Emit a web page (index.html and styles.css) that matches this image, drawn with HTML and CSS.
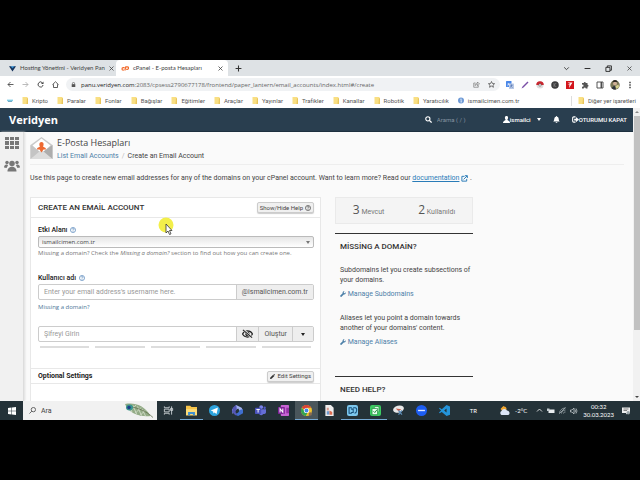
FILE: index.html
```html
<!DOCTYPE html>
<html lang="tr">
<head>
    <meta charset="UTF-8">
    <meta name="viewport" content="width=device-width, initial-scale=1.0">
    <title>cPanel - E-posta Hesapları</title>
    <link rel="stylesheet" href="styles.css">
</head>
<body>
<svg class="defs" width="0" height="0">
    <symbol id="folder" viewBox="0 0 12 14"><path d="M1 0h9l2 3v11H1z" fill="#f9df83"/><path d="M10 1l2 2v11h-3z" fill="#e9c55c"/></symbol>
    <symbol id="help" viewBox="0 0 16 16"><circle cx="8" cy="8" r="6.8" fill="none" stroke="currentColor" stroke-width="1.8"/><path d="M5.700 6.400c0-3.200 4.800-3 4.800-.4 0 1.700-2.500 1.700-2.500 3.600M8 11v1.800" fill="none" stroke="currentColor" stroke-width="1.800"/></symbol>
    <symbol id="wrench" viewBox="0 0 16 16"><path d="M15 3.500l-2.500 2.200-2-.500-.500-2L12.300.8C8.800-.3 6 2.500 7 5.800L.9 12c-1.800 2 1.200 5 3.200 3.100L10.200 9c3.500 1 6.100-2 4.800-5.500z" fill="currentColor"/></symbol>
    <symbol id="close" viewBox="0 0 10 10"><path d="M1 1l8 8M9 1l-8 8" stroke="currentColor" stroke-width="1.600"/></symbol>
</svg>

<header class="browser">
    <div class="tabs">
        <div class="tab">
            <svg class="icon" viewBox="0 0 16 16"><path d="M0 3h5l3 4 3-4h5l-8 12z" fill="#17335c"/><path d="M4 3h8l-4 5z" fill="#2d8bd0"/></svg>
            <span class="tab-title">Hosting Yönetimi - Veridyen Pan</span>
            <button class="plain" aria-label="Kapat"><svg class="tiny"><use href="#close"/></svg></button>
        </div>
        <div class="tab active">
            <svg class="icon cp" viewBox="0 0 20 14"><path d="M9 5H5.500a2.800 2.800 0 0 0 0 6H7M9.500 12l2.500-9h4a2.800 2.800 0 0 1 0 6h-3" fill="none" stroke="#f26a2b" stroke-width="3"/></svg>
            <span class="tab-title">cPanel - E-posta Hesapları</span>
            <button class="plain" aria-label="Kapat"><svg class="tiny"><use href="#close"/></svg></button>
        </div>
        <button class="plain new-tab" aria-label="Yeni sekme"><svg class="icon" viewBox="0 0 12 12"><path d="M6 1v10M1 6h10" stroke="#333" stroke-width="1.800"/></svg></button>
        <div class="window-buttons">
            <button class="plain"><svg class="icon" viewBox="0 0 12 12"><path d="M2 4l4 4 4-4" fill="none" stroke="#333" stroke-width="1.500"/></svg></button>
            <button class="plain"><svg class="icon" viewBox="0 0 12 12"><path d="M1 6h10" stroke="#222" stroke-width="1.600"/></svg></button>
            <button class="plain"><svg class="icon" viewBox="0 0 12 12"><path d="M1.500 4h7v7h-7zM4 4V1.500h7V9H8.500" fill="none" stroke="#222" stroke-width="1.500"/></svg></button>
            <button class="plain"><svg class="tiny"><use href="#close"/></svg></button>
        </div>
    </div>

    <div class="toolbar">
        <div class="nav-buttons">
            <button class="plain"><svg class="icon" viewBox="0 0 14 14"><path d="M13 7H2M7 2L2 7l5 5" fill="none" stroke="#444" stroke-width="1.700"/></svg></button>
            <button class="plain"><svg class="icon" viewBox="0 0 14 14"><path d="M1 7h11M7 2l5 5-5 5" fill="none" stroke="#aaa" stroke-width="1.600"/></svg></button>
            <button class="plain"><svg class="icon" viewBox="0 0 14 14"><path d="M12 8a5 5 0 1 1-1.500-4.800" fill="none" stroke="#444" stroke-width="1.900"/><path d="M13 1v5H8z" fill="#444"/></svg></button>
            <button class="plain"><svg class="icon" viewBox="0 0 14 14"><path d="M.8 7.500L7 1.500l6.200 6M3 6.500V13h8V6.500" fill="none" stroke="#444" stroke-width="1.700"/></svg></button>
        </div>
        <div class="address">
            <svg class="tiny" viewBox="0 0 12 14"><rect x="1" y="6" width="10" height="8" fill="#555"/><path d="M3 6V4a3 3 0 0 1 6 0v2" fill="none" stroke="#555" stroke-width="1.800"/></svg>
            <span class="url"><b>panu.veridyen.com</b>:2083/cpsess2790677178/frontend/paper_lantern/email_accounts/index.html#/create</span>
            <svg class="icon" viewBox="0 0 14 14"><path d="M5 4H1.500v8.500h9V9M4 9c0-3 2-4.500 5-4.500V2l4 4-4 3.500V7C7 7 5.500 7.500 4 9z" fill="none" stroke="#666" stroke-width="1.200"/></svg>
            <svg class="icon" viewBox="0 0 14 14"><path d="M7 1l1.800 4 4.400.4-3.300 2.900 1 4.200L7 10.200l-3.900 2.300 1-4.200L.8 5.400 5.200 5z" fill="none" stroke="#444" stroke-width="1.400"/></svg>
        </div>
        <div class="extensions">
            <svg class="ext" viewBox="0 0 16 16"><rect width="11" height="12" rx="1" fill="#4a87e8"/><rect x="6" y="5" width="10" height="11" rx="1" fill="#b9c9e6"/><path d="M2.500 6h5M5 4v2c0 2-1 3-2.500 4M5 6c0 2 1 3 2 3.500" stroke="#fff" fill="none"/><path d="M8.500 8.500h5M11 7v2l-2 4M9.500 10l3.500 3.500" stroke="#345b9e" fill="none"/></svg>
            <svg class="ext" viewBox="0 0 16 16"><path d="M1 15L3 11 13 1l2 2L5 13z" fill="#7a4fa6"/></svg>
            <svg class="ext" viewBox="0 0 16 16"><circle cx="8" cy="8" r="7" fill="#ddd"/><path d="M.5 8a7.500 7.500 0 0 1 15 0z" fill="#c9252e"/><circle cx="8" cy="8" r="2.500" fill="#fff" stroke="#444"/></svg>
            <svg class="ext" viewBox="0 0 16 16"><circle cx="8" cy="8" r="7.500" fill="#3b3b3d"/><path d="M6 4v8M10.500 4L6.500 8l4 4" stroke="#888" stroke-width="1.500" fill="none"/></svg>
            <svg class="ext" viewBox="0 0 16 16"><rect width="16" height="16" fill="#d3161c"/><path d="M3 3h10L6 14l1-6H3l6-2z" fill="#fff"/></svg>
            <svg class="ext" viewBox="0 0 16 16"><path d="M2 4h3.500a2 2 0 1 1 4 0H13v3.500a2 2 0 1 1 0 4V15H9.500a2 2 0 1 0-4 0H2v-4a2 2 0 1 0 0-3.500z" fill="#555"/></svg>
            <svg class="ext" viewBox="0 0 16 16"><path d="M2 2h12v12H2zM10 2v12M11 2v12" fill="none" stroke="#444" stroke-width="1.800"/></svg>
            <svg class="ext avatar" viewBox="0 0 20 20"><circle cx="10" cy="10" r="9.500" fill="#7a7856"/><circle cx="10" cy="7" r="4" fill="#d0b097"/><path d="M5 5a5 5 0 0 1 10 0l-2-1H8z" fill="#2b2722"/><path d="M3 16l6-5 3 8H7z" fill="#2c323b"/><path d="M11 12l6-3 1 5-5 4z" fill="#d7d28e"/></svg>
            <svg class="ext" viewBox="0 0 16 16"><path d="M8 1.500v3M8 6.500v3M8 11.500v3" stroke="#444" stroke-width="3"/></svg>
        </div>
    </div>

    <nav class="bookmarks">
        <svg class="mark" viewBox="0 0 14 14"><path d="M0 5h14v3H0z" fill="#76cbe6"/><path d="M2 8h10v2H2z" fill="#4c94b5"/></svg>
        <a href="#"><svg class="mark"><use href="#folder"/></svg>Kripto</a>
        <a href="#"><svg class="mark"><use href="#folder"/></svg>Paralar</a>
        <a href="#"><svg class="mark"><use href="#folder"/></svg>Fonlar</a>
        <a href="#"><svg class="mark"><use href="#folder"/></svg>Bağışlar</a>
        <a href="#"><svg class="mark"><use href="#folder"/></svg>Eğitimler</a>
        <a href="#"><svg class="mark"><use href="#folder"/></svg>Araçlar</a>
        <a href="#"><svg class="mark"><use href="#folder"/></svg>Yayınlar</a>
        <a href="#"><svg class="mark"><use href="#folder"/></svg>Trafikler</a>
        <a href="#"><svg class="mark"><use href="#folder"/></svg>Kanallar</a>
        <a href="#"><svg class="mark"><use href="#folder"/></svg>Robotik</a>
        <a href="#"><svg class="mark"><use href="#folder"/></svg>Yaratıcılık</a>
        <a href="#"><svg class="mark" viewBox="0 0 16 16"><circle cx="8" cy="8" r="8" fill="#6e9ad6"/><path d="M6 3h4v3H6zM7 7h3v6H7z" fill="#dce9f8"/></svg>ismailcimen.com.tr</a>
        <a href="#" class="others"><svg class="mark"><use href="#folder"/></svg>Diğer yer işaretleri</a>
    </nav>
</header>

<div class="viewport">
    <div class="page">
        <header class="topbar">
            <a href="#" class="brand">Veridyen</a>
            <label class="search">
                <svg class="icon" viewBox="0 0 16 16"><circle cx="6.500" cy="6.500" r="4.800" fill="none" stroke="#fff" stroke-width="2.600"/><path d="M10 10l5 5" stroke="#fff" stroke-width="3"/></svg>
                <input type="text" placeholder="Arama ( / )">
            </label>
            <button class="plain user"><svg class="icon" viewBox="0 0 16 16"><path d="M8 0c5 0 4 6 2 8.500 0 2 6 2 6 7.500H0c0-5.500 6-5.500 6-7.500C4 6 3 0 8 0z" fill="#fff"/></svg>ismailci<span class="caret"></span></button>
            <button class="plain bell" aria-label="Bildirimler"><svg class="icon" viewBox="0 0 16 16"><path d="M8 0c1 0 1.300.8 1.300 1.500C15 3 11.500 9 15.500 12.500H.5C4.500 9 1 3 6.700 1.500 6.700.8 7 0 8 0zM6 13.500h4a2 2 0 0 1-4 0z" fill="#fff"/></svg></button>
            <a href="#" class="logout"><svg class="icon" viewBox="0 0 16 16"><path d="M8 2H4a2.500 2.500 0 0 0-2.500 2.500v7A2.500 2.500 0 0 0 4 14h4" fill="none" stroke="#fff" stroke-width="2.500"/><path d="M5 6h4V2l7 6-7 6v-4H5z" fill="#fff"/></svg>OTURUMU KAPAT</a>
        </header>

        <div class="body">
            <aside class="sidebar">
                <svg class="side-icon" viewBox="0 0 14 14"><path d="M0 1h4v3H0zM5 1h4v3H5zM10 1h4v3h-4zM0 5h4v4H0zM5 5h4v4H5zM10 5h4v4h-4zM0 10h4v3H0zM5 10h4v3H5zM10 10h4v3h-4z" fill="#777"/></svg>
                <svg class="side-icon people" viewBox="0 0 32 24"><circle cx="16" cy="7" r="5.500" fill="#777"/><circle cx="6" cy="5" r="3.500" fill="#777"/><circle cx="26" cy="5" r="3.500" fill="#777"/><path d="M7 23c-1-13 19-13 18 0zM0 15c0-8 8-7 8-4l-3 5zM32 15c0-8-8-7-8-4l3 5z" fill="#777"/></svg>
            </aside>

            <main class="main">
                <div class="page-head">
                    <svg class="mail" viewBox="0 0 46 46"><path d="M1 17L23 1l22 16v28H1z" fill="#c9c9c9"/><path d="M5 18L23 4l18 14-18 16z" fill="#fff"/><path d="M1 17l22 16L1 45z" fill="#c4c4c4"/><path d="M45 17L23 33l22 12z" fill="#adadad"/><path d="M1 45l18-15q4-3 8 0l18 15z" fill="#dcdcdc"/><path d="M23 11c5 0 5 6 3 9 1 2 6 1 6 6h-5l-4 6-4-6h-5c0-5 5-4 6-6-2-3-2-9 3-9z" fill="#ee6a32"/></svg>
                    <div>
                        <h1>E-Posta Hesapları</h1>
                        <div class="crumbs"><a href="#">List Email Accounts</a><span>/</span>Create an Email Account</div>
                    </div>
                </div>

                <p class="intro">Use this page to create new email addresses for any of the domains on your cPanel account. Want to learn more? Read our <a href="#">documentation</a> <svg class="tiny" viewBox="0 0 16 16"><path d="M8 3H2v11h11V9M6 10l8-8M9 1.500h5.500V7" fill="none" stroke="#2a7cb8" stroke-width="2.200"/></svg> .</p>

                <div class="columns">
                    <form class="panel">
                        <div class="panel-head">
                            <h2>CREATE AN EMAİL ACCOUNT</h2>
                            <button type="button" class="small-btn">Show/Hide Help <svg class="help"><use href="#help"/></svg></button>
                        </div>
                        <div class="fields">
                            <label for="domain">Etki Alanı <svg class="help"><use href="#help"/></svg></label>
                            <div class="select-wrap">
                                <select id="domain"><option>ismailcimen.com.tr</option></select>
                                <span class="caret"></span>
                            </div>
                            <p class="hint">Missing a domain? Check the <i>Missing a domain?</i> section to find out how you can create one.</p>

                            <label for="username" class="spaced">Kullanıcı adı <svg class="help"><use href="#help"/></svg></label>
                            <div class="group">
                                <input id="username" type="text" placeholder="Enter your email address's username here.">
                                <span class="addon">@ismailcimen.com.tr</span>
                            </div>
                            <a href="#" class="hint">Missing a domain?</a>

                            <div class="group password">
                                <input type="password" placeholder="Şifreyi Girin" aria-label="Şifre">
                                <button type="button" class="addon" aria-label="Göster"><svg class="eye" viewBox="0 0 24 20"><path d="M1 10c5-9 17-9 22 0-5 9-17 9-22 0z" fill="none" stroke="#222" stroke-width="2.500"/><circle cx="12" cy="10" r="5" fill="#222"/><path d="M3 1l19 17" stroke="#eee" stroke-width="5"/><path d="M2 1l20 17" stroke="#222" stroke-width="2.500"/></svg></button>
                                <button type="button" class="addon">Oluştur</button>
                                <button type="button" class="addon more" aria-label="Seçenekler"><span class="caret"></span></button>
                            </div>
                            <div class="strength"><i></i><i></i><i></i><i></i><i></i></div>
                        </div>
                        <div class="optional">
                            <h3>Optional Settings</h3>
                            <button type="button" class="small-btn"><svg class="tiny" viewBox="0 0 16 16"><path d="M0 16l1-5L10 2l4 4-9 9zM11 1l1-1q4 0 4 4l-1 1z" fill="#333"/></svg> Edit Settings</button>
                        </div>
                    </form>

                    <aside class="info">
                        <div class="counts">
                            <div><b>3</b> Mevcut</div>
                            <div><b>2</b> Kullanıldı</div>
                        </div>
                        <section>
                            <h2>MİSSİNG A DOMAİN?</h2>
                            <p>Subdomains let you create subsections of your domains.</p>
                            <a href="#"><svg class="tiny"><use href="#wrench"/></svg> Manage Subdomains</a>
                            <p>Aliases let you point a domain towards another of your domains' content.</p>
                            <a href="#"><svg class="tiny"><use href="#wrench"/></svg> Manage Aliases</a>
                        </section>
                        <section>
                            <h2>NEED HELP?</h2>
                        </section>
                    </aside>
                </div>
            </main>
        </div>
    </div>
    <div class="scrollbar">
        <span class="arrow up"></span>
        <span class="thumb"></span>
        <span class="arrow down"></span>
    </div>
    <svg class="pointer" viewBox="0 0 16 20"><circle cx="8" cy="8" r="7.500" fill="#f3ef4a"/><path d="M8 7v9l2-2 1.500 3.500 1.500-.600L11.500 13.500H14z" fill="#fff" stroke="#333" stroke-width=".8"/></svg>
</div>

<footer class="taskbar">
    <button class="plain start" aria-label="Başlat"><svg class="app" viewBox="0 0 16 16"><path d="M0 2.200L7 1.200V7.500H0zM8 1l8-1v7.500H8zM0 8.500h7v6.300l-7-1zM8 8.500h8V16l-8-1z" fill="#fff"/></svg></button>
    <label class="task-search">
        <svg class="icon" viewBox="0 0 16 16"><circle cx="10" cy="6" r="5" fill="none" stroke="#333" stroke-width="1.600"/><path d="M6.500 9.500L1 15" stroke="#333" stroke-width="1.600"/></svg>
        <input type="text" placeholder="Ara">
        <svg class="feather" viewBox="0 0 60 30"><path d="M2 2C22-2 42 6 53 26 36 28 12 24 2 2z" fill="#93ab86"/><path d="M10 6l6 12M18 5l7 17M27 7l8 18M36 12l7 14M14 15L24 4M23 20L34 9M33 24l9-9" stroke="#dde4d4" stroke-width="1.500"/><path d="M8 7c20 2 36 9 50 22" fill="none" stroke="#5f6c4b" stroke-width="1.500"/><ellipse cx="11" cy="9" rx="7" ry="6" fill="#39958d"/><circle cx="10" cy="9" r="3.500" fill="#1d3d8c"/></svg>
    </label>
    <div class="apps">
        <button class="plain"><svg class="app" viewBox="0 0 16 16"><path d="M2 2v2h7V2M2 14v-2h7v2M2 6h7v4H2zM12.500 2v12M11 5h3v3h-3z" fill="none" stroke="#ccd3d6" stroke-width="1.300"/></svg></button>
        <button class="plain open"><svg class="app" viewBox="0 0 16 16"><path d="M0 1h6l2 2h8v12H0z" fill="#f5c449"/><path d="M0 6h16v9H0z" fill="#fbdc78"/><path d="M3 10h10v5H10v-2H6v2H3z" fill="#3d8fd1"/></svg></button>
        <button class="plain"><svg class="app" viewBox="0 0 16 16"><circle cx="8" cy="8" r="8" fill="#2ca3dd"/><path d="M2.500 8L13 3.500l-2 9.500-3-2-1.500 1.500L6 9.500z" fill="#fff"/></svg></button>
        <button class="plain"><svg class="app" viewBox="0 0 16 16"><path d="M6 0l8 4 2 4-4 2-3-5-5 3-3 5-1-6z" fill="#a3b2f0"/><path d="M16 6v6l-7 4-5-2 5-3 3-4z" fill="#3f6fd0"/><path d="M1 4l5-4 1 5-2 5 3 4-3 1-5-5z" fill="#5558b5"/></svg></button>
        <button class="plain"><svg class="app" viewBox="0 0 16 16"><circle cx="9" cy="3" r="2.800" fill="#7b83eb"/><circle cx="14" cy="4" r="1.800" fill="#5059c9"/><path d="M6 6h10v5q-1 3-4 2-3 4-6 0z" fill="#656ed5"/><rect y="4" width="9" height="9" rx="1" fill="#4b53bc"/><path d="M2 6.500h5M4.500 6.500V11" stroke="#fff" stroke-width="1.400"/></svg></button>
        <button class="plain"><svg class="app" viewBox="0 0 16 16"><rect x="4" width="12" height="16" rx="1" fill="#c764d3"/><path d="M12 4h4v8h-4z" fill="#9332a5"/><rect y="3" width="10" height="10" rx="1" fill="#80239a"/><path d="M3 11V5.500l4 5V5" fill="none" stroke="#fff" stroke-width="1.500"/></svg></button>
        <button class="plain open current"><svg class="app" viewBox="0 0 16 16"><circle cx="8" cy="8" r="8" fill="#f3c52e"/><path d="M8 8L1 4a8 8 0 0 1 14 0H8z" fill="#dc4437"/><path d="M1 4a8 8 0 0 0 6 12l3-6H6z" fill="#35a353"/><circle cx="8" cy="8" r="3.800" fill="#fff"/><circle cx="8" cy="8" r="2.800" fill="#4285e8"/><circle cx="13.500" cy="13" r="2.500" fill="#8a6c52"/></svg></button>
        <button class="plain"><svg class="app" viewBox="0 0 16 16"><path d="M2 0h8l4 4v12H2z" fill="#eee"/><path d="M4 4h3v4H4z" fill="#d89b8f"/><path d="M4 9h4v5H4z" fill="#6d9ace"/><path d="M8 8l4 2v4H8z" fill="#db6c51"/></svg></button>
        <button class="plain open"><svg class="app" viewBox="0 0 16 16"><rect width="16" height="16" rx="3" fill="#7cc7ed"/><path d="M7 4H3v8h4M6 6h3v5H6M9 4h3c3 0 3 7-1 8" fill="none" stroke="#164d78" stroke-width="1.500"/></svg></button>
        <button class="plain open"><svg class="app" viewBox="0 0 16 16"><rect width="16" height="16" rx="3" fill="#3ccb62"/><path d="M3 5h8v9H3zM6 2h7v8" fill="#e9fff0" stroke="#1b8939"/><path d="M5 9l2 2 3-4" fill="none" stroke="#1b8939" stroke-width="1.400"/></svg></button>
        <button class="plain"><svg class="app" viewBox="0 0 16 16"><ellipse cx="8" cy="6" rx="8" ry="5" fill="#e8e8e8" transform="rotate(-15 8 6)"/><path d="M4 5l8 1-4 3z" fill="#c95a4a"/><path d="M8 8l5 6M13 8l-5 6" stroke="#5d8db7" stroke-width="1.800"/></svg></button>
        <button class="plain"><svg class="app" viewBox="0 0 16 16"><circle cx="8" cy="8" r="8" fill="#1d5df2"/><path d="M3 7h10v2H3z" fill="#dfe9ff"/></svg></button>
        <button class="plain"><svg class="app" viewBox="0 0 16 16"><path d="M11 0l5 2v12l-5 2-7-6-3 2-1-1 3-3-3-3 1-1 3 2zM11 5L7.500 8l3.500 3z" fill="#2494da" fill-rule="evenodd"/></svg></button>
    </div>
    <div class="tray">
        <span class="lang">TR</span>
        <svg class="weather" viewBox="0 0 24 20"><path d="M9 1l4 5-5 6-5-5z" fill="#efae3c"/><circle cx="10" cy="7" r="5" fill="#f0a52f"/><path d="M5 19a4.500 4.500 0 0 1 0-8 6 6 0 0 1 11-1 5 5 0 0 1 3 9z" fill="#dbe5f6"/></svg>
        <span class="degree">-2°C</span>
        <svg class="icon" viewBox="0 0 14 14"><path d="M2 9l5-5 5 5" fill="none" stroke="#fff" stroke-width="1.600"/></svg>
        <svg class="ext" viewBox="0 0 16 16"><path d="M3 5h12v7H3z" fill="#e8ecee"/><path d="M0 3h5v5H0z" fill="#c3cbcf"/></svg>
        <svg class="icon" viewBox="0 0 14 14"><path d="M1 13C1 7 6 2 13 2M5 13c0-4 3-7 8-7M9 13c0-2 1-3 4-3M1 13L13 1" fill="none" stroke="#bbc4c8" stroke-width="1.300"/></svg>
        <svg class="ext" viewBox="0 0 16 16"><path d="M1 6h3l4-4v12l-4-4H1z" fill="none" stroke="#dde3e5" stroke-width="1.300"/><path d="M10 5q2 3 0 6M12 3q4 5 0 10" fill="none" stroke="#dde3e5" stroke-width="1.300"/></svg>
        <div class="clock">00:32<br>30.03.2023</div>
        <svg class="ext" viewBox="0 0 16 16"><path d="M0 1h16v11h-5l-3 3v-3H0z" fill="#eee"/><path d="M3 4h10M3 7h7" stroke="#555" stroke-width="1.400"/><circle cx="12.500" cy="11.500" r="3.500" fill="#9aa5a9"/></svg>
    </div>
</footer>
</body>
</html>
```

FILE: styles.css
```css
* {
    box-sizing: border-box;
}

body {
    display: flex;
    flex-direction: column;
    height: 100vh;
    margin: 0;
    padding: 60px 0;
    overflow: hidden;
    background: #000;
    color: #444;
    font-family: Roboto, "Open Sans", sans-serif;
    font-size: 6px;
    line-height: 10px;
}

h1, h2, h3, p {
    margin: 0;
    font-weight: 400;
}

a {
    color: #4d80a8;
    text-decoration: none;
}

svg {
    flex: none;
}

input, button, select {
    margin: 0;
    padding: 0;
    font: inherit;
    color: inherit;
}

input {
    min-width: 0;
    border: 0;
    outline: 0;
    background: none;
}

.defs {
    position: absolute;
}

.plain {
    display: flex;
    align-items: center;
    justify-content: center;
    border: 0;
    background: none;
}

.tiny {
    width: 5px;
    height: 5px;
}

.icon {
    width: 7px;
    height: 7px;
}

.ext {
    width: 8px;
    height: 8px;
}

.caret {
    width: 4px;
    border: 2px solid transparent;
    border-top: 3px solid currentColor;
    border-bottom: 0;
}

/* browser */
.browser {
    flex: none;
}

.tabs {
    display: flex;
    height: 16px;
    background: #dee2e5;
    font-family: Lato, sans-serif;
}

.tab {
    display: flex;
    align-items: center;
    gap: 4px;
    width: 116px;
    padding: 0 5px 0 9px;
}

.tab.active {
    width: 112px;
    padding-left: 5px;
    border-radius: 4px 4px 0 0;
    background: #fff;
}

.tab .cp {
    width: 8px;
}

.tab-title {
    flex: 1;
    white-space: nowrap;
}

.new-tab {
    width: 20px;
}

.window-buttons {
    display: flex;
    margin-left: auto;
}

.window-buttons button {
    width: 21px;
}

.toolbar {
    display: flex;
    align-items: center;
    height: 17px;
    background: #fff;
}

.nav-buttons {
    display: flex;
    gap: 8px;
    padding: 0 7px;
}

.address {
    display: flex;
    flex: 1;
    align-items: center;
    gap: 8px;
    height: 13px;
    padding: 0 5px;
    border-radius: 7px;
    background: #f0f2f4;
}

.address .tiny {
    margin-right: -3px;
}

.url {
    flex: 1;
    white-space: nowrap;
    color: #666;
    font-family: "Open Sans", sans-serif;
}

.url b {
    color: #222;
    font-weight: 400;
}

.extensions {
    display: flex;
    align-items: center;
    gap: 7px;
    padding: 0 6px;
}

.avatar {
    width: 10px;
    height: 10px;
    margin: 0 -1px;
}

.bookmarks {
    display: flex;
    align-items: center;
    gap: 9px;
    height: 15px;
    padding: 0 4px 0 7px;
    background: #fff;
    white-space: nowrap;
}

.bookmarks a {
    display: flex;
    align-items: center;
    gap: 4px;
    color: #555;
}

.bookmarks .others {
    margin-left: auto;
    padding-left: 6px;
    border-left: 1px solid #ddd;
}

.mark {
    width: 6px;
    height: 7px;
}

/* cpanel */
.viewport {
    position: relative;
    display: flex;
    flex: 1;
    min-height: 0;
    background: #fafafa;
}

.page {
    display: flex;
    flex: 1;
    flex-direction: column;
    min-width: 0;
    overflow: hidden;
}

.topbar {
    display: flex;
    flex: none;
    align-items: center;
    height: 24px;
    padding: 0 6px 0 9px;
    border-bottom: 1px solid #1d303f;
    background: #293e4f;
    color: #fff;
    font-weight: 500;
}

.topbar a {
    color: #fff;
}

.topbar .brand {
    margin-right: auto;
    font-family: "Open Sans", sans-serif;
    font-size: 11px;
    font-weight: 700;
}

.search {
    display: flex;
    align-items: center;
    gap: 5px;
    width: 78px;
}

.search input {
    width: 60px;
    font-weight: 400;
}

.search input::placeholder {
    color: #8593a0;
}

.user .caret {
    margin-left: 6px;
}

.bell {
    margin: 0 12px;
}

.logout {
    display: flex;
    align-items: center;
}

.body {
    display: flex;
    flex: 1;
    min-height: 0;
}

.sidebar {
    display: flex;
    flex-direction: column;
    align-items: center;
    gap: 9px;
    width: 24px;
    padding-top: 4px;
    border-right: 1px solid #ddd;
    background: #f1f1f1;
    box-shadow: 1px 0 2px #ddd;
}

.side-icon {
    width: 14px;
    height: 14px;
}

.side-icon.people {
    width: 16px;
}

.main {
    flex: 1;
    padding: 0 9px 0 6px;
    font-size: 7px;
}

.page-head {
    display: flex;
    gap: 4px;
    height: 33px;
    padding-top: 4px;
    border-bottom: 1px solid #eee;
}

.mail {
    width: 23px;
    height: 24px;
}

h1 {
    font-family: "Open Sans", sans-serif;
    font-size: 9px;
    line-height: 14px;
}

.crumbs {
    line-height: 13px;
}

.crumbs span {
    margin: 0 3px;
    color: #bbb;
}

.intro {
    padding: 8px 0 14px;
}

.intro a {
    color: #2a7cb8;
    text-decoration: underline;
}

.intro .tiny {
    width: 7px;
    height: 7px;
    vertical-align: middle;
}

.columns {
    display: grid;
    grid-template-columns: 291fr 138fr 137fr;
    gap: 14px;
}

.panel {
    height: 230px;
    border: 1px solid #e8e8e8;
    background: #fff;
}

.panel-head,
.optional {
    display: flex;
    align-items: center;
    justify-content: space-between;
    padding: 0 6px 0 7px;
    border-bottom: 1px solid #e8e8e8;
}

.panel-head {
    height: 20px;
}

h2 {
    color: #333;
    font-size: 8px;
    font-weight: 500;
}

h3 {
    color: #222;
    font-size: 7px;
    font-weight: 700;
}

.small-btn {
    display: flex;
    align-items: center;
    gap: 2px;
    height: 11px;
    padding: 0 2px;
    border: 1px solid #ccc;
    border-radius: 2px;
    background: #f0f0f0;
    box-shadow: 0 1px 1px #ccc;
    font-size: 6px;
}

.fields {
    display: flex;
    flex-direction: column;
    padding: 6px 6px 0 7px;
}

.fields label {
    display: flex;
    align-items: center;
    gap: 3px;
    height: 12px;
    color: #222;
    font-weight: 500;
}

.help {
    width: 6px;
    height: 6px;
}

label .help {
    color: #4d80b8;
}

.select-wrap {
    position: relative;
    display: flex;
}

.select-wrap select {
    flex: 1;
    height: 12px;
    padding: 0 3px;
    appearance: none;
    border: 1px solid #bbb;
    border-radius: 2px;
    background: linear-gradient(#e6e6e6, #fff);
    font-family: "Open Sans", sans-serif;
    font-size: 6px;
}

.select-wrap .caret {
    position: absolute;
    top: 5px;
    right: 4px;
    color: #777;
}

.hint {
    color: #777;
    font-family: "Open Sans", sans-serif;
    font-size: 6px;
}

a.hint {
    padding-top: 2px;
    color: #4d7898;
}

.fields .spaced {
    margin-top: 14px;
}

.group {
    display: flex;
    height: 16px;
    border: 1px solid #ccc;
    border-radius: 2px;
}

.group input {
    flex: 1;
    padding: 0 5px;
}

.group input::placeholder {
    color: #999;
}

.addon {
    display: flex;
    align-items: center;
    padding: 0 5px;
    border: 0;
    border-left: 1px solid #ccc;
    background: #eee;
    color: #555;
}

.more {
    padding: 0 8px;
    color: #222;
}

.group.password {
    margin-top: 14px;
}

.eye {
    width: 11px;
    height: 10px;
}

.strength {
    display: flex;
    gap: 6px;
    padding: 4px 3px 0 2px;
}

.strength i {
    flex: 1;
    height: 2px;
    background: #ddd;
}

.optional {
    height: 16px;
    margin-top: 20px;
    border-top: 1px solid #e8e8e8;
}

.counts {
    display: flex;
    align-items: center;
    justify-content: space-around;
    height: 27px;
    border: 1px solid #eaeaea;
    background: #f4f4f4;
    color: #777;
}

.counts b {
    color: #555;
    font-family: "Open Sans", sans-serif;
    font-size: 12px;
    font-weight: 400;
}

.info section {
    height: 143px;
    padding: 8px 0 0 5px;
    border-top: 1px solid #333;
}

.info .counts + section {
    margin-top: 9px;
}

.info h2 {
    margin-bottom: 13px;
}

.info p {
    margin-bottom: 4px;
}

.info a {
    display: block;
    margin-bottom: 14px;
}

.info a .tiny {
    width: 6px;
    height: 6px;
    vertical-align: middle;
}

.scrollbar {
    display: flex;
    flex: none;
    flex-direction: column;
    align-items: center;
    width: 7px;
    background: #f1f1f1;
}

.thumb {
    flex: none;
    width: 6px;
    height: 73%;
    background: #c1c1c1;
}

.arrow {
    width: 4px;
    margin: 3px 0;
    border: 2px solid transparent;
    color: #444;
}

.arrow.up {
    border-top: 0;
    border-bottom: 2px solid #888;
}

.arrow.down {
    margin-top: auto;
    border-bottom: 0;
    border-top: 2px solid #444;
}

.pointer {
    position: absolute;
    top: 109px;
    left: 158px;
    width: 16px;
    height: 20px;
}

/* taskbar */
.taskbar {
    display: flex;
    flex: none;
    height: 19px;
    background: #243238;
    color: #fff;
}

.start {
    width: 23px;
}

.app {
    width: 11px;
    height: 11px;
}

.start .app {
    width: 8px;
    height: 8px;
}

.task-search {
    display: flex;
    align-items: center;
    gap: 5px;
    width: 134px;
    padding: 0 3px 0 6px;
    background: #f1f1f1;
}

.task-search input {
    flex: 1;
    font-size: 7px;
}

.task-search input::placeholder {
    color: #444;
}

.feather {
    width: 30px;
    height: 15px;
}

.apps {
    display: flex;
}

.apps button {
    width: 23px;
    border-top: 1px solid transparent;
    border-bottom: 1px solid transparent;
}

.apps .open {
    border-bottom-color: #76a9d3;
}

.apps .current {
    background: #4a565b;
}

.tray {
    display: flex;
    flex: 1;
    align-items: center;
    justify-content: flex-end;
    gap: 4px;
    padding-right: 10px;
    font-family: Lato, sans-serif;
}

.lang {
    margin-right: 18px;
}

.weather {
    width: 12px;
    height: 11px;
}

.degree {
    margin-right: 5px;
}

.clock {
    margin: 0 4px 0 1px;
    line-height: 8px;
    text-align: center;
}
```
